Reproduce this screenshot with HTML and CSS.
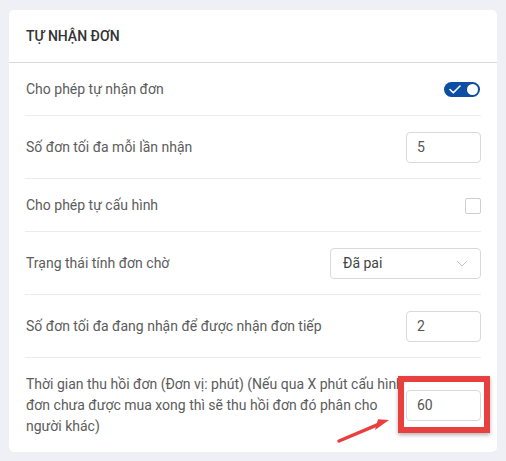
FILE: index.html
```html
<!DOCTYPE html>
<html lang="vi">
<head>
    <meta charset="UTF-8">
    <meta name="viewport" content="width=device-width, initial-scale=1.0">
    <title>Tự nhận đơn</title>
    <link rel="stylesheet" href="styles.css">
</head>
<body>
    <div class="card">
        <div class="card-header">TỰ NHẬN ĐƠN</div>
        <div class="card-body">
            <div class="row">
                <div class="label">Cho phép tự nhận đơn</div>
                <div class="switch">
                    <svg class="switch-check" width="12" height="9" viewBox="0 0 12 9">
                        <path d="M1 4.5 L4.3 7.8 L11 1" fill="none" stroke="#fff" stroke-width="1.6" stroke-linecap="round" stroke-linejoin="round"/>
                    </svg>
                    <span class="switch-knob"></span>
                </div>
            </div>
            <div class="row">
                <div class="label">Số đơn tối đa mỗi lần nhận</div>
                <div class="input">5</div>
            </div>
            <div class="row">
                <div class="label">Cho phép tự cấu hình</div>
                <div class="checkbox"></div>
            </div>
            <div class="row">
                <div class="label">Trạng thái tính đơn chờ</div>
                <div class="select">
                    <span>Đã pai</span>
                    <svg width="12" height="7" viewBox="0 0 12 7">
                        <path d="M1 1 L6 6 L11 1" fill="none" stroke="#c4c4c4" stroke-width="1"/>
                    </svg>
                </div>
            </div>
            <div class="row">
                <div class="label">Số đơn tối đa đang nhận để được nhận đơn tiếp</div>
                <div class="input">2</div>
            </div>
            <div class="row">
                <div class="label label-wide">Thời gian thu hồi đơn (Đơn vị: phút) (Nếu qua X phút cấu hình đơn chưa được mua xong thì sẽ thu hồi đơn đó phân cho người khác)</div>
                <div class="marked">
                    <div class="input">60</div>
                    <div class="mark-box"></div>
                    <svg class="mark-arrow" width="56" height="30" viewBox="0 0 56 30">
                        <line x1="3" y1="25" x2="43" y2="8.2" stroke="#e8403f" stroke-width="3.5" stroke-linecap="round"/>
                        <polygon points="53,4 42,3.2 39,14" fill="#e8403f"/>
                    </svg>
                </div>
            </div>
        </div>
    </div>
</body>
</html>
```

FILE: styles.css
```css
/* nền trang */
body {
    margin: 0;
    background: #eef0f5;
    font-family: Roboto, "Liberation Sans", Arial, sans-serif;
    font-size: 14px;
    line-height: 21px;
    color: #5c5c5c;
}

/* khung thẻ */
.card {
    margin: 10px 9px 0 9px;
    width: 488px;
    background: #fff;
    border-radius: 5px;
}

.card-header {
    padding: 16px 17px 15px 17px;
    border-bottom: 1px solid #d9d9d9;
    color: #333;
    font-weight: 500;
}

.card-body {
    padding: 0 16px;
}

/* mỗi dòng cấu hình */
.row {
    display: flex;
    justify-content: space-between;
    align-items: center;
    padding: 16px 0 15px 0;
    border-bottom: 1px solid #ececec;
}

.row:last-child {
    border-bottom: none;
}

.label {
    padding-left: 1px;
}

.label-wide {
    flex: 1;
    margin-right: -6px;
}

/* ô nhập */
.input {
    box-sizing: border-box;
    width: 75px;
    height: 31px;
    padding: 4px 10px;
    border: 1px solid #d9d9d9;
    border-radius: 4px;
    color: #555;
    background: #fff;
    flex-shrink: 0;
}

.select {
    box-sizing: border-box;
    display: flex;
    justify-content: space-between;
    align-items: center;
    width: 151px;
    height: 31px;
    padding: 0 12px 0 12px;
    border: 1px solid #d9d9d9;
    border-radius: 4px;
    color: #444;
}

.checkbox {
    box-sizing: border-box;
    width: 16px;
    height: 16px;
    border: 1px solid #cfcfcf;
    border-radius: 2px;
}

/* công tắc */
.switch {
    position: relative;
    width: 36px;
    height: 15px;
    margin-right: 1px;
    border-radius: 8px;
    background: #0c4ea3;
}

.switch-check {
    position: absolute;
    left: 5px;
    top: 3px;
}

.switch-knob {
    position: absolute;
    right: 2px;
    top: 2px;
    width: 11px;
    height: 11px;
    border-radius: 50%;
    background: #fff;
}

/* chú thích màu đỏ */
.marked {
    position: relative;
}

.mark-box {
    position: absolute;
    left: -8px;
    right: -9px;
    top: -14px;
    bottom: -12px;
    border: 6px solid #e8403f;
    box-shadow: 0 2px 4px rgba(0, 0, 0, 0.3);
}

.mark-arrow {
    position: absolute;
    left: -70px;
    top: 26px;
}
```
